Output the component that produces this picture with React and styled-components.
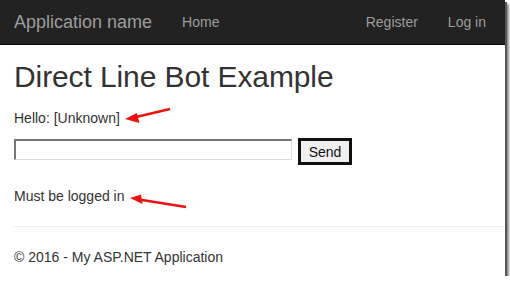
import React, { useState } from 'react';
import styled, { createGlobalStyle } from 'styled-components';

const GlobalStyle = createGlobalStyle`
    html, body {
        margin: 0;
        padding: 0;
        background: #ffffff;
    }
    body {
        font-family: "Liberation Sans", Arial, sans-serif;
        font-size: 14px;
        color: #333333;
    }
`;

const Frame = styled.div`
    width: 505px;
    height: 276px;
    background: #ffffff;
    box-shadow: 2px 2px 0 #555555, 4px 4px 2px rgba(0, 0, 0, 0.45);
    overflow: hidden;
    display: flex;
    flex-direction: column;
`;

const Navbar = styled.nav`
    height: 44px;
    background: #222222;
    border-bottom: 1px solid #080808;
    display: flex;
    align-items: center;
    padding: 0 14px;
`;

const Brand = styled.a`
    font-size: 18px;
    color: #9d9d9d;
    margin-right: 30px;
`;

const NavLink = styled.a`
    font-size: 14px;
    color: #9d9d9d;
    margin-left: ${(p) => (p.$first ? '0' : '30px')};
    margin-right: ${(p) => (p.$push ? 'auto' : '0')};
    padding-right: ${(p) => (p.$last ? '5px' : '0')};
`;

const Body = styled.main`
    padding: 0 0 0 14px;
    display: flex;
    flex-direction: column;
`;

const Title = styled.h1`
    font-size: 30px;
    font-weight: 400;
    margin: 15px 0 14px;
    line-height: 34px;
    letter-spacing: -0.1px;
`;

const Line = styled.p`
    margin: 0;
    display: flex;
    align-items: center;
    line-height: 20px;
`;

const Arrow = styled.svg`
    display: block;
    margin: -2px 0 -2px 4px;
    overflow: visible;
`;

const Form = styled.div`
    display: flex;
    align-items: flex-start;
    gap: 6px;
    margin: 10px 0 21px;
`;

const TextBox = styled.input`
    width: 278px;
    height: 21px;
    margin-top: 1px;
    box-sizing: border-box;
    border: 1px solid #dcdcdc;
    border-top: 2px solid #767676;
    border-left: 2px solid #767676;
    padding: 0 2px;
    font-family: inherit;
    font-size: 14px;
`;

const SendButton = styled.button`
    width: 54px;
    height: 27px;
    box-sizing: border-box;
    border: 3px solid #111111;
    background: #efefef;
    font-family: "Liberation Sans", Arial, sans-serif;
    font-size: 14px;
    color: #111111;
    padding: 0;
`;

const Rule = styled.hr`
    border: 0;
    border-top: 1px solid #eeeeee;
    margin: 20px 0 0;
`;

const Footer = styled.footer`
    margin-top: 20px;
    line-height: 20px;
`;

function RedArrow({ down }) {
    return (
        <Arrow width="60" height="24" viewBox="0 0 60 24">
            {down ? (
                <>
                    <line x1="10" y1="15.5" x2="57" y2="23" stroke="#ee1111" strokeWidth="2.4" />
                    <polygon points="1,14 12,10.5 13.6,20" fill="#ee1111" />
                </>
            ) : (
                <>
                    <line x1="10" y1="11.5" x2="46" y2="3" stroke="#ee1111" strokeWidth="2.4" />
                    <polygon points="1,13 12.7,7 15.5,17" fill="#ee1111" />
                </>
            )}
        </Arrow>
    );
}

export default function App() {
    const [message, setMessage] = useState('');

    return (
        <>
            <GlobalStyle />
            <Frame>
                <Navbar>
                    <Brand>Application name</Brand>
                    <NavLink $first $push>Home</NavLink>
                    <NavLink $first>Register</NavLink>
                    <NavLink $last>Log in</NavLink>
                </Navbar>
                <Body>
                    <Title>Direct Line Bot Example</Title>
                    <Line>
                        Hello: [Unknown]
                        <RedArrow />
                    </Line>
                    <Form>
                        <TextBox
                            value={message}
                            onChange={(event) => setMessage(event.target.value)}
                        />
                        <SendButton>Send</SendButton>
                    </Form>
                    <Line>
                        Must be logged in
                        <RedArrow down />
                    </Line>
                    <Rule />
                    <Footer>© 2016 - My ASP.NET Application</Footer>
                </Body>
            </Frame>
        </>
    );
}
